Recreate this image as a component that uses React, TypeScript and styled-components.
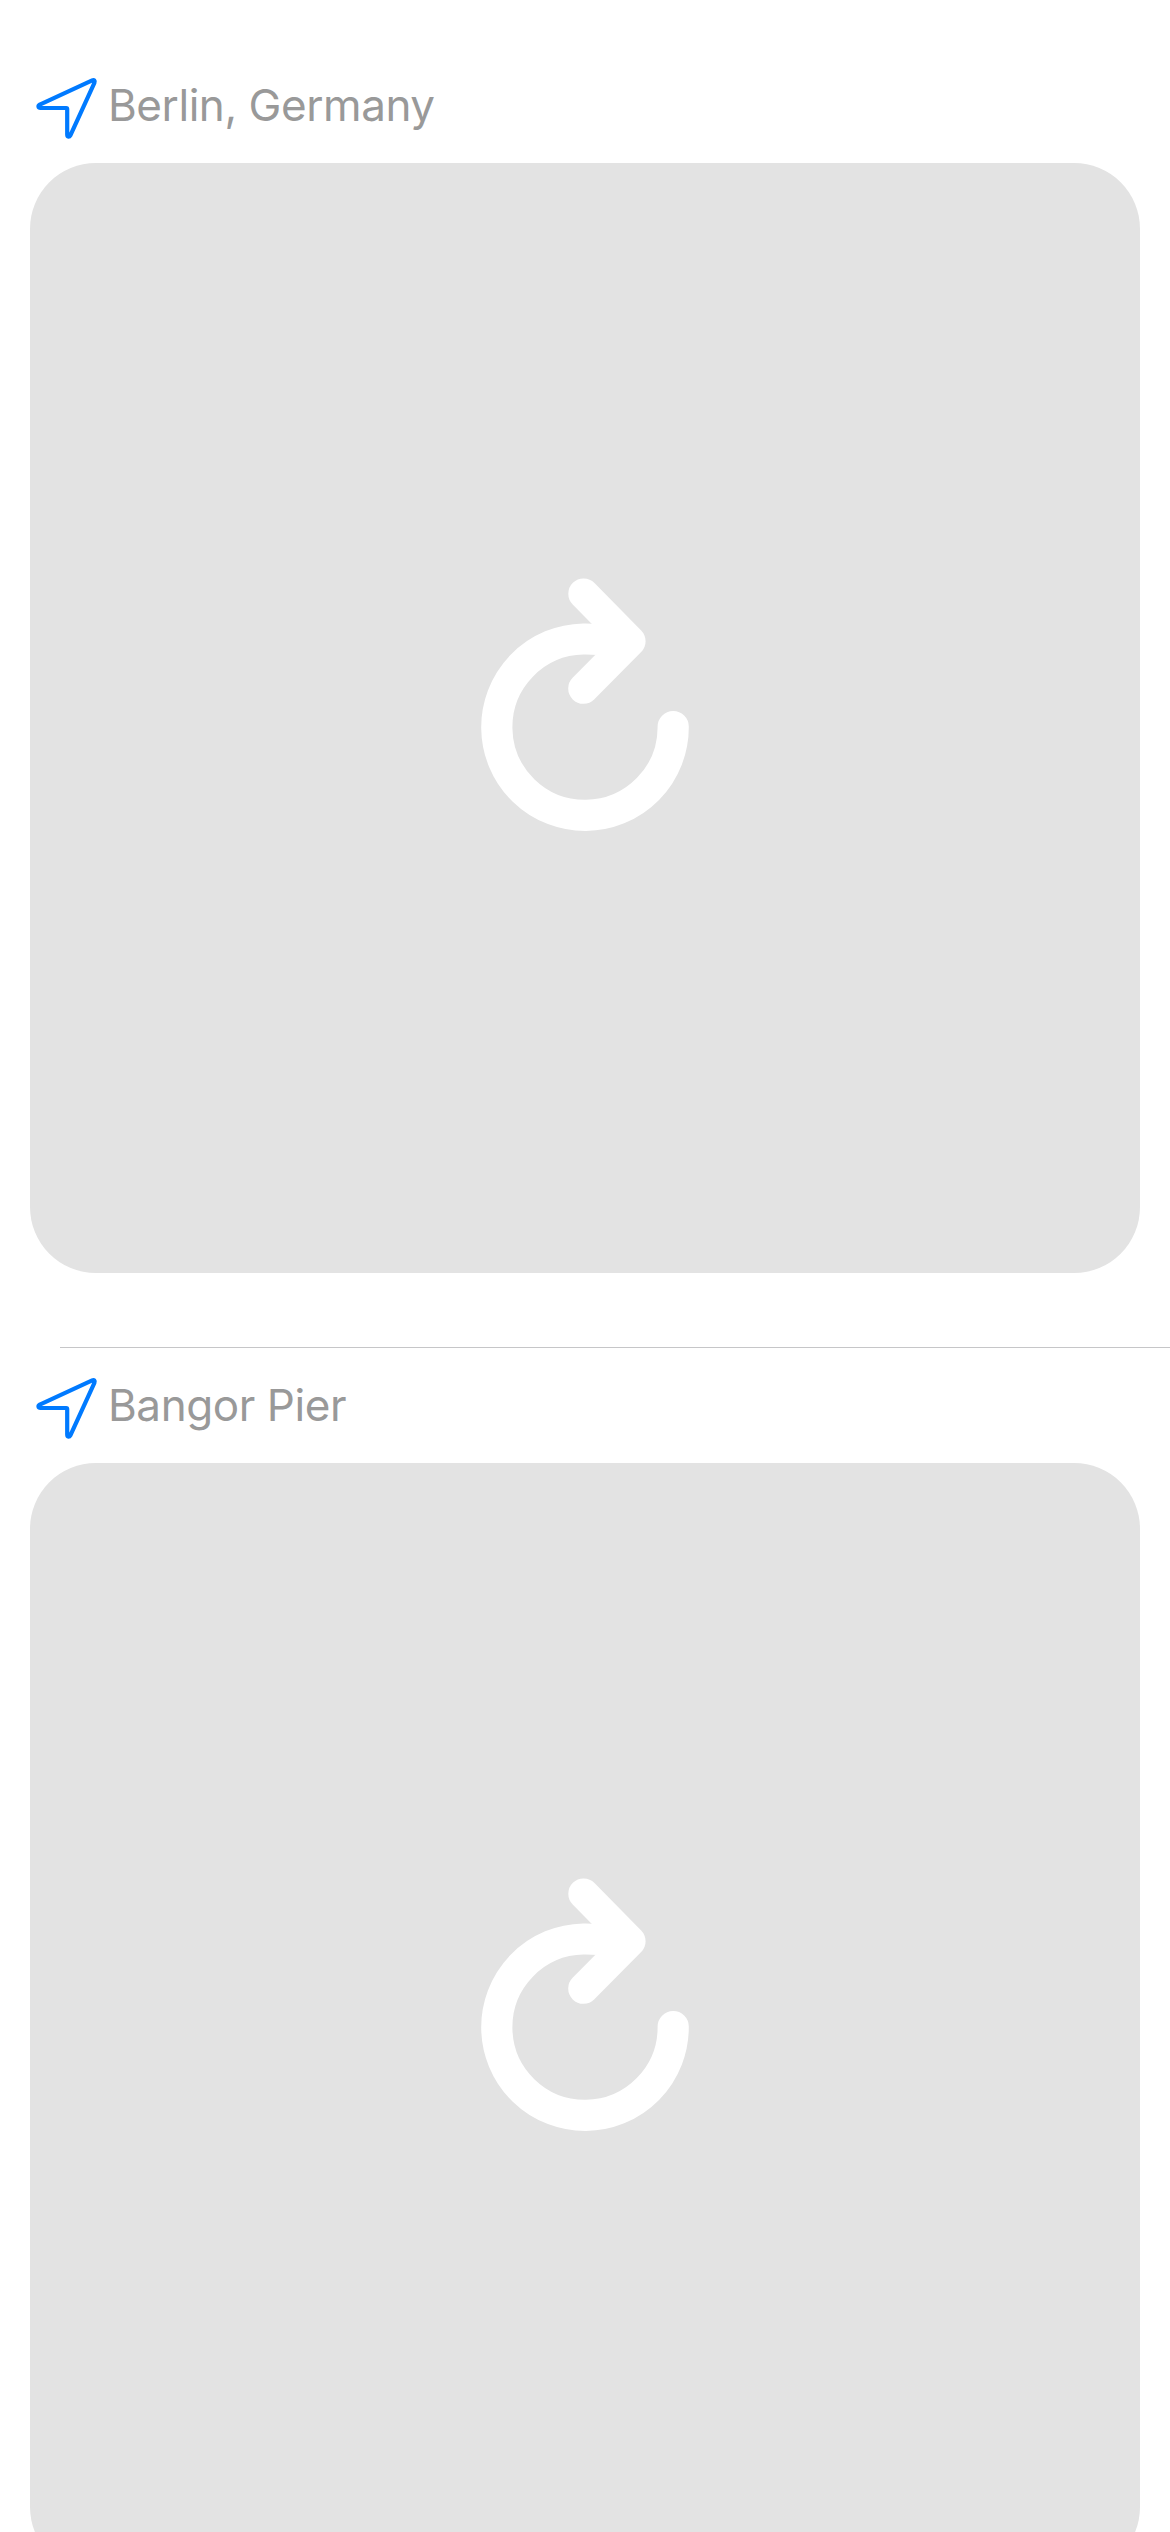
import React from "react";
import styled, { createGlobalStyle } from "styled-components";

const GlobalStyle = createGlobalStyle`
  html, body {
    margin: 0;
    background: #ffffff;
  }
  body {
    height: 2532px;
    overflow: hidden;
  }
`;

const Feed = styled.main`
  display: flex;
  flex-direction: column;
  height: 2532px;
  padding-top: 48px;
  box-sizing: border-box;
  overflow: hidden;
  background: #ffffff;
  font-family: Inter, "Liberation Sans", sans-serif;
`;

const Post = styled.article`
  flex: none;
  display: flex;
  flex-direction: column;
  height: 1299px;
  padding: 0 30px;
  box-sizing: border-box;
`;

const Divider = styled.hr`
  flex: none;
  width: auto;
  height: 1px;
  margin: 0 0 0 60px;
  border: 0;
  background: #c6c6c8;
`;

const PlaceRow = styled.header`
  display: flex;
  align-items: center;
  height: 115px;
`;

const PlaceIcon = styled.svg`
  flex: none;
  width: 72px;
  height: 72px;
`;

const PlaceName = styled.span`
  margin-left: 6px;
  padding-bottom: 2px;
  color: #999999;
  font-size: 44px;
  line-height: 54px;
  letter-spacing: -0.43px;
  white-space: nowrap;
`;

const Photo = styled.button`
  display: flex;
  align-items: center;
  justify-content: center;
  flex: none;
  width: 1110px;
  height: 1110px;
  padding: 0;
  border: 0;
  border-radius: 66px;
  background: #e3e3e3;
`;

const ReloadIcon = styled.svg`
  width: 250px;
  height: 290px;
`;

const places = ["Berlin, Germany", "Bangor Pier"];

function LocationArrow() {
  return (
    <PlaceIcon viewBox="30 70 72 72" fill="none" stroke="#007aff" strokeWidth="4.2" strokeLinejoin="round" aria-hidden>
      <path d="M92.2 80.4 L39.8 104.6 Q38.2 105.6 38.5 106.8 Q38.8 108 40.4 108 L66.2 108 Q67.2 108 67.2 109 L67.2 134.6 Q67.2 136.6 68.4 136.7 Q69.6 136.8 70.5 135.2 L94.4 82.8 Q95 81.2 94.4 80.6 Q93.6 79.8 92.2 80.4 Z" />
    </PlaceIcon>
  );
}

function Reload() {
  return (
    <ReloadIcon viewBox="460 573 250 290" fill="none" stroke="#ffffff" strokeLinecap="round" strokeLinejoin="round" aria-hidden>
      <path strokeWidth="31.2" d="M673.2 726.6 A88.2 88.2 0 1 1 583.4 639 Q598 638.8 616 641.4" />
      <path strokeWidth="30.6" d="M583.6 593.7 L630.3 641.2 L583.5 688.5" />
    </ReloadIcon>
  );
}

export default function App() {
  return (
    <>
      <GlobalStyle />
      <Feed>
        {places.map((name, i) => (
          <React.Fragment key={name}>
            {i > 0 && <Divider />}
            <Post>
              <PlaceRow>
                <LocationArrow />
                <PlaceName>{name}</PlaceName>
              </PlaceRow>
              <Photo aria-label="Reload photo">
                <Reload />
              </Photo>
            </Post>
          </React.Fragment>
        ))}
      </Feed>
    </>
  );
}
